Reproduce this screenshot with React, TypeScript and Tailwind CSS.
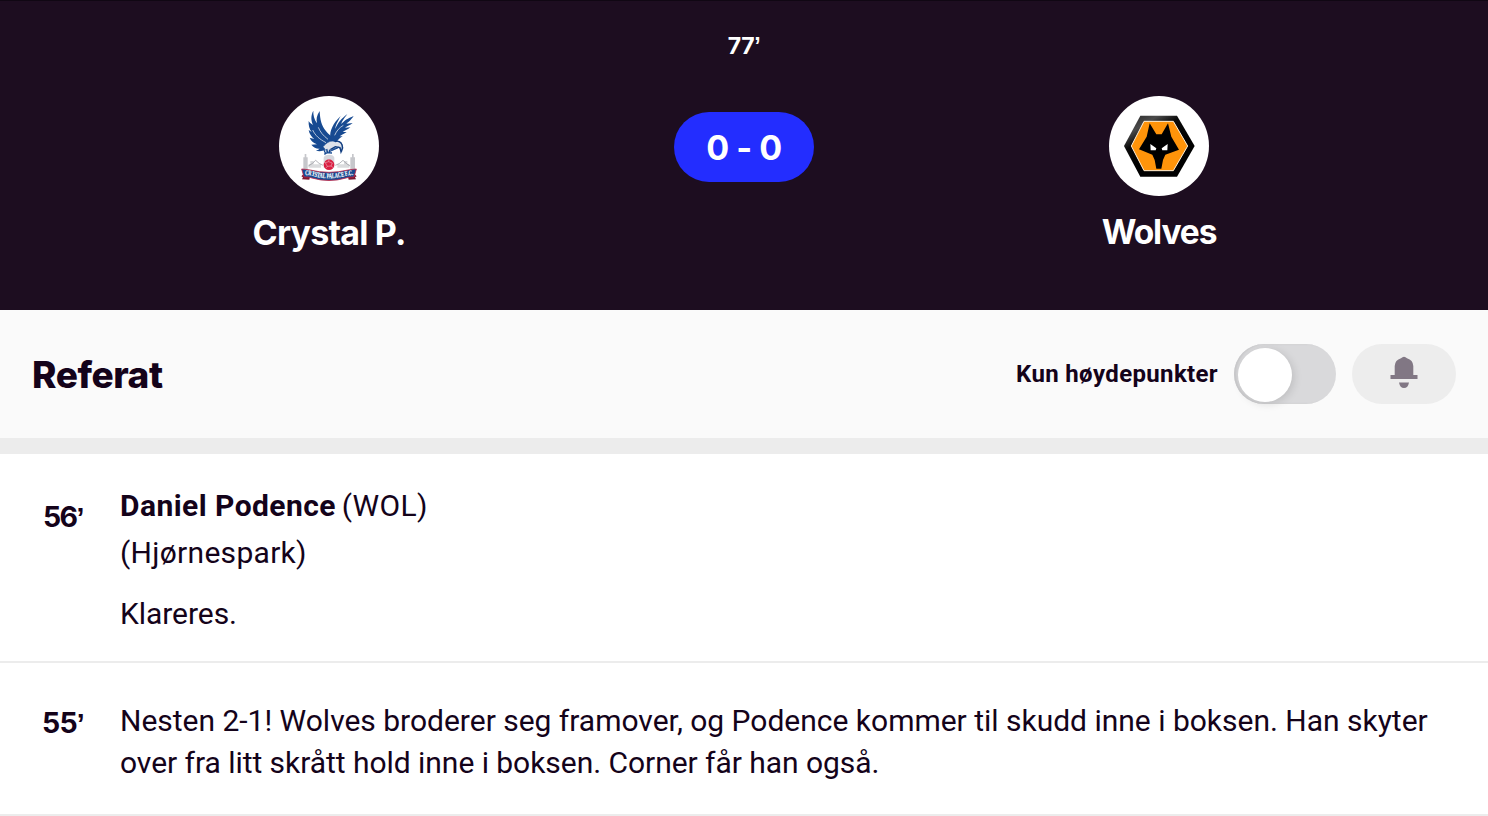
import type { ReactNode } from "react";

const INTER = "font-['Inter',sans-serif]";
const ROBOTO = "font-['Roboto',sans-serif]";

function PalaceCrest() {
  return (
    <svg viewBox="15 18 300 300" className="size-[100px]">
      <circle cx="165" cy="168" r="150" fill="#fff" />
      <g fill="#c6c7cb">
        <path d="M92 192h5v10h4v38H88v-38h4zM234 192h5v10h4v38h-14v-38h5z" />
        <path d="M104 222h5v-9h10v10h22v10h-37zM190 223h20v-10h10v9h6v11h-36z" opacity=".65" />
      </g>
      <path d="M103 228q12-6 22-17 10 11 22 15M184 226q12-3 23-15 8 9 21 17" fill="none" stroke="#85878e" strokeWidth="1.8" />
      <g fill="#174a91">
        <path d="M104 92c-1 14 2 25 9 34l-9-6c2 12 8 20 17 27l-14-4c5 11 12 16 22 20l-17 1c7 9 16 13 25 12-4 3-8 5-12 5 11 5 20 3 30-4l14 8 24-10-8-18c-8-17-22-23-31-36-11-14-16-32-17-58-9 13-11 24-8 37-8-11-12-25-11-38-8 15-7 29-1 43-8-6-12-9-13-13z" />
        <path d="M169 145c-3-23 9-46 31-67-11 20-16 30-16 38 8-18 18-30 36-44-12 17-17 23-18 30 9-10 19-17 37-24-10 15-17 19-22 23l19-2c-8 7-16 9-23 14l16-1c-8 7-15 9-23 14h12c-8 6-15 8-21 13h9c-9 6-14 9-19 19z" />
      </g>
      <g fill="none" stroke="#fff" strokeWidth="2">
        <path d="M116 120c8 17 20 27 40 38M133 112c6 15 14 24 29 36" />
        <path d="M182 136c6-14 14-23 26-30" />
      </g>
      <path d="M147 170c12-14 25-20 36-15 9-3 20 3 22 13l-2 17-8-14-16 5-18 12z" fill="#dfe3ea" stroke="#174a91" strokeWidth="2" />
      <path d="M183 155c9-4 18 0 21 9l2 10-5 12-3-13-14-3-15 9" fill="none" stroke="#123e80" strokeWidth="4" />
      <path d="M149 178l5 11M158 177l3 12M167 179l-1 10M151 193l8-5 15 1" stroke="#174a91" strokeWidth="4" fill="none" />
      <path d="M149 203q2-9 16-9t16 9v30h-32z" fill="#d6d7dd" />
      <circle cx="165" cy="224" r="16" fill="#d91f42" />
      <path d="M154 218l10-3 11 4-4 9-11 1zM164 215l1-7M171 228l7 5M160 229l-5 6M154 218l-5-2" stroke="#f3d6dc" fill="none" strokeWidth="1.4" />
      <path d="M91 250l-9 9 5 3-3 6 22 1 3-14zM239 250l9 9-5 3 3 6-22 1-3-14z" fill="#7d1730" />
      <path d="M83 237q13 1 25 3 57 14 114 0 12-2 25-3l-7 24q-15-1-24 3-51 15-102 0-9-4-24-3z" fill="#174a91" stroke="#bf2445" strokeWidth="2.5" />
      <path id="ribbon" d="M91 255q17 0 28 4 46 12 92 0 11-4 28-4" fill="none" />
      <text fontFamily="Liberation Serif" fontSize="21" fontWeight="700" fill="#fff" stroke="#fff" strokeWidth=".5" textAnchor="middle">
        <textPath href="#ribbon" startOffset="50%" textLength="147" lengthAdjust="spacingAndGlyphs">CRYSTAL PALACE F.C.</textPath>
      </text>
    </svg>
  );
}

function WolvesCrest() {
  return (
    <svg viewBox="15 18 300 300" className="size-[100px]">
      <defs>
        <linearGradient id="rim" x1="0" y1="0" x2=".45" y2=".65">
          <stop offset="0" stopColor="#222" />
          <stop offset=".35" stopColor="#4a4a4a" />
          <stop offset=".6" stopColor="#090909" />
          <stop offset="1" stopColor="#000" />
        </linearGradient>
      </defs>
      <circle cx="165" cy="168" r="150" fill="#fff" />
      <path d="M109 77h110l53 91-53 92H109L60 168z" fill="url(#rim)" />
      <path d="M120 94h88l43 74-43 74h-88l-38-74z" fill="#ff940a" stroke="#fff0d8" strokeWidth="3" />
      <path d="M137 100l20 33h16l19-33 10 40 23 39-41 15-7 16-5 26h-15l-5-26-7-16-40-16 23-38z" fill="#000" />
      <path d="M139 162l18 13-2 6h-15zM191 162l-18 13 2 6h15z" fill="#fff" />
    </svg>
  );
}

function Team({ name, nameClass, children }: { name: string; nameClass: string; children: ReactNode }) {
  return (
    <div className="flex w-[658px] flex-col items-center pt-24">
      {children}
      <div className={`mt-4 whitespace-nowrap leading-[41px] font-bold text-white ${INTER} ${nameClass}`}>{name}</div>
    </div>
  );
}

function Minute({ value }: { value: number }) {
  return (
    <>
      {value}
      <span className="font-['Liberation_Sans',sans-serif] leading-none">’</span>
    </>
  );
}

export default function App() {
  return (
    <main className={`h-[816px] w-[1488px] overflow-hidden bg-white text-[#14031a] ${ROBOTO}`}>
      <header className="flex h-[310px] justify-between border-t border-[#100713] bg-[#1d0d20]">
        <div className="-mt-px">
          <Team name="Crystal P." nameClass="text-[34px] tracking-[-0.8px]"><PalaceCrest /></Team>
        </div>
        <div className={`flex w-[172px] shrink-0 flex-col items-center text-white ${INTER}`}>
          <div className="mt-[30px] h-[30px] text-[23px] leading-[30px] font-bold tracking-[-0.4px]"><Minute value={77} /></div>
          <div className="mt-[51px] flex h-[70px] w-[140px] items-center justify-center rounded-full bg-[#232dff] text-[34px] font-bold tracking-[-0.5px] whitespace-nowrap">0 - 0</div>
        </div>
        <div className="-mt-px">
          <Team name="Wolves" nameClass="text-[33.5px] tracking-[-1.1px]"><WolvesCrest /></Team>
        </div>
      </header>

      <section className="flex h-36 items-center border-b-16 border-[#ececec] bg-[#fafafa] px-8">
        <h1 className={`pt-0.5 text-[37px] leading-[44px] font-extrabold tracking-[-0.45px] ${INTER}`}>Referat</h1>
        <span className="ml-auto text-[24px] font-bold tracking-[0.35px] whitespace-nowrap">Kun høydepunkter</span>
        <button role="switch" aria-checked="false" aria-label="Kun høydepunkter" className="ml-4 flex h-[60px] w-[102px] items-center rounded-full bg-[#d9d9db] pt-0.5 pl-1 shadow-[inset_2px_0_2px_#c8c8ca]">
          <span className="size-[54px] rounded-full bg-white shadow-[2px_2px_8px_#00000020]" />
        </button>
        <button aria-label="Varsler" className="ml-4 flex h-[60px] w-[104px] items-center justify-center rounded-full bg-[#ededed]">
          <svg viewBox="0 0 28 32" className="mb-1 h-8 w-7 fill-[#817784]">
            <path d="M11 2.2Q14-.8 17 2.2Q23 4 23.3 10V19H27.5V23H.5V19H4.7V10Q5 4 11 2.2ZM9 26.5H19Q18 32 14 32T9 26.5Z" />
          </svg>
        </button>
      </section>

      <article className="flex h-[209px] border-b-2 border-[#ececec] pt-7">
        <div className={`w-[120px] shrink-0 pt-[15px] pl-[43px] text-[28.5px] leading-10 font-bold tracking-[-1.6px] ${INTER}`}><Minute value={56} /></div>
        <div className="text-[30px] leading-[47px] whitespace-nowrap">
          <p><b className="tracking-[0.45px]">Daniel Podence</b><span className="-ml-0.5 tracking-[0.3px]"> (WOL)</span></p>
          <p className="tracking-[0.3px]">(Hjørnespark)</p>
          <p className="mt-[14px] tracking-[-0.05px]">Klareres.</p>
        </div>
      </article>
      <article className="flex h-[153px] border-b-2 border-[#ececec] pt-[37px]">
        <div className={`w-[120px] shrink-0 pt-px pl-[42px] text-[28.5px] leading-[44px] font-bold tracking-[-0.8px] ${INTER}`}><Minute value={55} /></div>
        <div className="text-[30px] leading-[42px] whitespace-nowrap">
          <p className="tracking-[-0.01px]">Nesten 2-1! Wolves broderer seg framover, og Podence kommer til skudd inne i boksen. Han skyter</p>
          <p className="tracking-[-0.04px]">over fra litt skrått hold inne i boksen. Corner får han også.</p>
        </div>
      </article>
    </main>
  );
}
